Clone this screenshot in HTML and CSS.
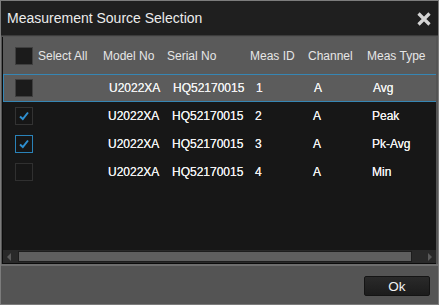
FILE: index.html
```html
<!DOCTYPE html>
<html lang="en">

<head>
  <meta charset="UTF-8">
  <title>Measurement Source Selection</title>
  <link rel="stylesheet" href="styles.css">
</head>

<body>
  <div class="dialog">
    <div class="titleBar">
      <span class="title">Measurement Source Selection</span>
      <svg class="closeBtn" width="14" height="14" viewBox="0 0 14 14"><path d="M1.5 1.5 L12.5 12.5 M12.5 1.5 L1.5 12.5" stroke="#d4d4d4" stroke-width="3.2"/></svg>
    </div>

    <div class="panel">
      <div class="grid head">
        <div class="cell first"><span class="box"></span>Select All</div>
        <div class="cell">Model No</div>
        <div class="cell">Serial No</div>
        <div class="cell">Meas ID</div>
        <div class="cell">Channel</div>
        <div class="cell">Meas Type</div>
      </div>

      <div class="grid row selected">
        <div class="cell first"><span class="box"></span></div>
        <div class="cell">U2022XA</div>
        <div class="cell">HQ52170015</div>
        <div class="cell">1</div>
        <div class="cell">A</div>
        <div class="cell">Avg</div>
      </div>
      <div class="grid row">
        <div class="cell first"><span class="box checked"><svg width="12" height="12" viewBox="0 0 12 12"><path d="M2 6.5 L4.8 9 L10 2.5" fill="none" stroke="#2e8fd0" stroke-width="2"/></svg></span></div>
        <div class="cell">U2022XA</div>
        <div class="cell">HQ52170015</div>
        <div class="cell">2</div>
        <div class="cell">A</div>
        <div class="cell">Peak</div>
      </div>
      <div class="grid row">
        <div class="cell first"><span class="box checked focus"><svg width="12" height="12" viewBox="0 0 12 12"><path d="M2 6.5 L4.8 9 L10 2.5" fill="none" stroke="#2e8fd0" stroke-width="2"/></svg></span></div>
        <div class="cell">U2022XA</div>
        <div class="cell">HQ52170015</div>
        <div class="cell">3</div>
        <div class="cell">A</div>
        <div class="cell">Pk-Avg</div>
      </div>
      <div class="grid row">
        <div class="cell first"><span class="box empty"></span></div>
        <div class="cell">U2022XA</div>
        <div class="cell">HQ52170015</div>
        <div class="cell">4</div>
        <div class="cell">A</div>
        <div class="cell">Min</div>
      </div>

      <div class="filler"></div>

      <div class="hScroll">
        <span class="arrow left"></span>
        <span class="thumb"></span>
        <span class="arrow right"></span>
      </div>
    </div>

    <div class="footer">
      <button class="okBtn">Ok</button>
    </div>
  </div>
</body>

</html>
```

FILE: styles.css
```css
body {
  margin: 0;
  background-color: #555;
  font-family: "Liberation Sans", Arial, sans-serif;
}

.dialog {
  width: 437px;
  height: 303px;
  border: 1px solid #7c7c7c;
  background-color: #545454;
  display: flex;
  flex-direction: column;
}

.titleBar {
  height: 34px;
  background-color: #1f1f1f;
  display: flex;
  align-items: center;
  justify-content: space-between;
  padding: 0 7px 0 6px;
  border-bottom: 1px solid #3c3c3c;
}

.title {
  color: #ececec;
  font-size: 14px;
}

.closeBtn {
  margin-top: 1px;
}

.panel {
  margin: 1px 2px 0 1px;
  height: 226px;
  background-color: #171717;
  border-left: 1px solid #0c0c0c;
  border-bottom: 1px solid #0c0c0c;
  display: flex;
  flex-direction: column;
}

.grid {
  display: grid;
  grid-template-columns: 100px 64px 83px 58px 59px 1fr;
  align-items: center;
  font-size: 12px;
  color: #f0f0f0;
}

.head {
  height: 37px;
  background-color: #5a5a5a;
  color: #e6e6e6;
}

.head .cell {
  padding-top: 1px;
}

.row {
  height: 28px;
  box-sizing: border-box;
}

.row .cell {
  padding-left: 5px;
  text-shadow: 0 0 0.4px #fff;
}

.selected {
  background-color: #5c5c5c;
  border-top: 1px solid #3686b4;
  border-bottom: 1px solid #3686b4;
  border-left: 1px solid #3686b4;
}

.cell.first {
  display: flex;
  align-items: center;
  gap: 5px;
  padding-left: 12px;
}

.row .cell.first {
  padding-left: 12px;
}

.selected .cell.first {
  padding-left: 11px;
}

.box {
  width: 16px;
  height: 16px;
  background-color: #1b1b1b;
  border: 1px solid #3f3f3f;
  display: flex;
  align-items: center;
  justify-content: center;
}

.box.checked {
  background-color: #161616;
  border-color: #333;
}

.box.focus {
  border-color: #2a82b8;
}

.box.empty {
  background-color: #161616;
  border-color: #303030;
}

.filler {
  flex: 1;
}

.hScroll {
  height: 13px;
  background-color: #292929;
  display: flex;
  align-items: center;
  padding: 0 4px;
  gap: 5px;
}

.thumb {
  flex: 1;
  height: 9px;
  background-color: #5e5e5e;
  border: 1px solid #1d1d1d;
}

.arrow {
  width: 0;
  height: 0;
  border-top: 4px solid transparent;
  border-bottom: 4px solid transparent;
}

.arrow.left {
  border-right: 4px solid #5a5a5a;
  margin-right: 2px;
}

.arrow.right {
  border-left: 4px solid #5a5a5a;
  margin-left: 11px;
}

.footer {
  flex: 1;
  border-top: 2px solid #6e6e6e;
  display: flex;
  justify-content: flex-end;
  align-items: center;
  padding-right: 8px;
}

.okBtn {
  width: 66px;
  height: 20px;
  margin-top: 2px;
  background: linear-gradient(#2a2a2a, #1c1c1c);
  border: 1px solid #141414;
  border-radius: 2px;
  color: #f2f2f2;
  font-family: "Liberation Sans", Arial, sans-serif;
  font-size: 13.5px;
  padding: 0;
}
```
